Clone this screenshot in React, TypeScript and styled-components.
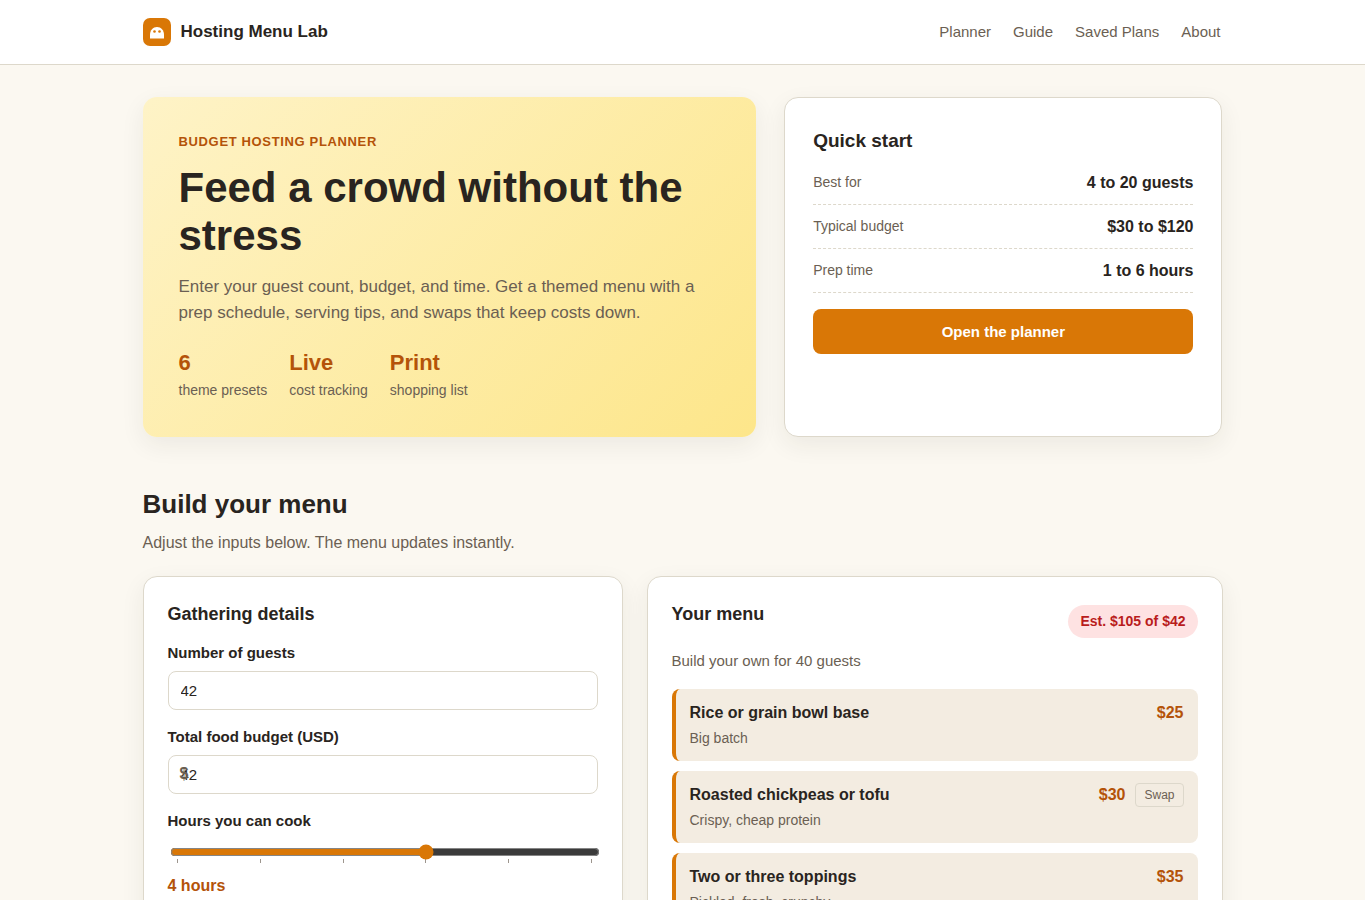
import React, { useState } from "react";
import styled, { createGlobalStyle } from "styled-components";

const color = {
  page: "#fbf8f1",
  card: "#ffffff",
  tint: "#f3ece1",
  border: "#ddd8cb",
  text: "#292420",
  muted: "#6b5f53",
  accent: "#d97706",
  accentDark: "#b45309",
};

const GlobalStyle = createGlobalStyle`
  *, *::before, *::after { box-sizing: border-box; }
  body {
    margin: 0;
    background: ${color.page};
    color: ${color.text};
    font-family: "Liberation Sans", Arial, sans-serif;
    font-size: 16px;
    line-height: 24px;
  }
  h1, h2, h3, p, ul, dl, dd { margin: 0; padding: 0; }
`;

const Container = styled.div`
  max-width: 1120px;
  margin: 0 auto;
  padding: 0 20px;
`;

const Header = styled.header`
  background: ${color.card};
  border-bottom: 1px solid ${color.border};
`;

const HeaderRow = styled(Container)`
  display: flex;
  align-items: center;
  justify-content: space-between;
  padding-top: 18px;
  padding-bottom: 18px;
`;

const Brand = styled.a`
  display: flex;
  align-items: center;
  gap: 10px;
  height: 28px;
  color: ${color.text};
  font-size: 17px;
  font-weight: 700;
  text-decoration: none;
`;

const Nav = styled.nav`
  display: flex;
  gap: 22px;
  padding-right: 2px;
`;

const NavLink = styled.a`
  color: ${color.muted};
  font-size: 15px;
  text-decoration: none;
`;

const Hero = styled.section`
  display: grid;
  grid-template-columns: 1.4fr 1fr;
  gap: 28px;
  padding-top: 32px;
`;

const HeroPanel = styled.div`
  padding: 36px;
  border-radius: 14px;
  background: linear-gradient(135deg, #fef3c7, #fde68a);
  box-shadow: 0 8px 24px rgba(41, 36, 32, 0.07);
`;

const Eyebrow = styled.p`
  color: ${color.accentDark};
  font-size: 13px;
  font-weight: 700;
  line-height: 18px;
  letter-spacing: 0.05em;
  text-transform: uppercase;
`;

const HeroTitle = styled.h1`
  margin-top: 13px;
  font-size: 42px;
  line-height: 48px;
`;

const HeroText = styled.p`
  margin-top: 14px;
  color: ${color.muted};
  font-size: 17px;
  line-height: 26px;
`;

const Stats = styled.ul`
  display: flex;
  gap: 22px;
  margin-top: 23px;
  list-style: none;
`;

const StatValue = styled.strong`
  display: block;
  color: ${color.accentDark};
  font-size: 22px;
  line-height: 28px;
`;

const StatLabel = styled.span`
  display: block;
  margin-top: 3px;
  color: ${color.muted};
  font-size: 14px;
  line-height: 21px;
`;

const Card = styled.section<{ $pad?: number }>`
  min-width: 0;
  padding: ${(p) => p.$pad ?? 24}px;
  border: 1px solid ${color.border};
  border-radius: 14px;
  background: ${color.card};
  box-shadow: 0 8px 24px rgba(41, 36, 32, 0.07);
`;

const QuickTitle = styled.h2`
  font-size: 19px;
  line-height: 30px;
  margin-bottom: 5px;
`;

const Fact = styled.div`
  display: flex;
  justify-content: space-between;
  padding: 10px 0 9px;
  border-bottom: 1px dashed ${color.border};
`;

const FactName = styled.dt`
  color: ${color.muted};
  font-size: 14px;
  line-height: 22px;
`;

const FactValue = styled.dd`
  font-weight: 700;
`;

const PrimaryButton = styled.button`
  width: 100%;
  margin-top: 16px;
  padding: 12px 20px;
  border: 0;
  border-radius: 8px;
  background: ${color.accent};
  color: #fff;
  font: 700 15px/21px "Liberation Sans", Arial, sans-serif;
  cursor: pointer;
`;

const SectionHead = styled.div`
  padding: 48px 0 21px;
`;

const SectionTitle = styled.h2`
  font-size: 26px;
  line-height: 39px;
`;

const SectionText = styled.p`
  margin-top: 7px;
  color: ${color.muted};
`;

const Planner = styled.div`
  display: grid;
  grid-template-columns: 1fr 1.2fr;
  gap: 24px;
  padding-bottom: 48px;
`;

const CardTitle = styled.h3`
  margin-bottom: 15px;
  font-size: 18px;
  line-height: 26px;
`;

const Field = styled.div`
  margin-bottom: 16px;
`;

const Label = styled.label`
  display: block;
  margin-bottom: 7px;
  font-size: 15px;
  font-weight: 700;
  line-height: 22px;
`;

const InputWrap = styled.div`
  position: relative;
`;

const Prefix = styled.span`
  position: absolute;
  top: 7px;
  left: 12px;
  color: ${color.muted};
  font-weight: 700;
  pointer-events: none;
`;

const TextInput = styled.input`
  display: block;
  width: 100%;
  height: 39px;
  padding: 0 12px;
  border: 1px solid ${color.border};
  border-radius: 8px;
  background: ${color.card};
  color: ${color.text};
  font: 15px "Liberation Sans", Arial, sans-serif;
  appearance: textfield;

  &::-webkit-inner-spin-button { display: none; }
`;

const Range = styled.input`
  width: 100%;
  accent-color: ${color.accent};
`;

const RangeValue = styled.output`
  display: block;
  margin-top: 4px;
  color: ${color.accentDark};
  font-weight: 700;
`;

const MenuHead = styled.div`
  display: flex;
  align-items: center;
  justify-content: space-between;
`;

const CostPill = styled.span`
  padding: 6px 12px;
  border-radius: 999px;
  background: #fee2e2;
  color: #b91c1c;
  font-size: 14px;
  font-weight: 700;
  line-height: 21px;
`;

const MenuNote = styled.p`
  margin: 8px 0 17px;
  color: ${color.muted};
  font-size: 15px;
  line-height: 22px;
`;

const DishList = styled.ul`
  display: grid;
  gap: 10px;
  list-style: none;
`;

const Dish = styled.li`
  display: flex;
  align-items: flex-start;
  justify-content: space-between;
  padding: 12px 14px;
  border-left: 4px solid ${color.accent};
  border-radius: 8px;
  background: ${color.tint};
`;

const DishName = styled.strong`
  display: block;
`;

const DishNote = styled.span`
  display: block;
  margin-top: 2px;
  color: ${color.muted};
  font-size: 14px;
  line-height: 22px;
`;

const DishSide = styled.div`
  display: flex;
  align-items: center;
  gap: 10px;
`;

const Price = styled.span`
  color: ${color.accentDark};
  font-weight: 700;
`;

const SwapButton = styled.button`
  height: 24px;
  padding: 0 8px;
  border: 1px solid ${color.border};
  border-radius: 4px;
  background: transparent;
  color: ${color.muted};
  font: 12px "Liberation Sans", Arial, sans-serif;
  cursor: pointer;
`;

const stats = [
  { value: "6", label: "theme presets" },
  { value: "Live", label: "cost tracking" },
  { value: "Print", label: "shopping list" },
];

const facts = [
  { name: "Best for", value: "4 to 20 guests" },
  { name: "Typical budget", value: "$30 to $120" },
  { name: "Prep time", value: "1 to 6 hours" },
];

const dishes = [
  { name: "Rice or grain bowl base", note: "Big batch", price: 25, swap: false },
  { name: "Roasted chickpeas or tofu", note: "Crispy, cheap protein", price: 30, swap: true },
  { name: "Two or three toppings", note: "Pickled, fresh, crunchy", price: 35, swap: false },
];

function Logo() {
  return (
    <svg width="28" height="28" viewBox="0 0 28 28" aria-hidden="true">
      <rect width="28" height="28" rx="7" fill={color.accent} />
      <path d="M7 20.500V17C7 12 10 9 14 9s7 3 7 8v3.500z" fill="#fff" />
      <circle cx="11.500" cy="13.500" r="1.300" fill={color.accent} />
      <circle cx="16.500" cy="13.500" r="1.300" fill={color.accent} />
    </svg>
  );
}

export default function App() {
  const [guests, setGuests] = useState("42");
  const [budget, setBudget] = useState("42");
  const [hours, setHours] = useState(4);

  return (
    <>
      <GlobalStyle />
      <Header>
        <HeaderRow>
          <Brand href="#">
            <Logo />
            Hosting Menu Lab
          </Brand>
          <Nav>
            <NavLink href="#planner">Planner</NavLink>
            <NavLink href="#guide">Guide</NavLink>
            <NavLink href="#saved">Saved Plans</NavLink>
            <NavLink href="#about">About</NavLink>
          </Nav>
        </HeaderRow>
      </Header>
      <Container as="main">
        <Hero>
          <HeroPanel>
            <Eyebrow>Budget hosting planner</Eyebrow>
            <HeroTitle>Feed a crowd without the stress</HeroTitle>
            <HeroText>
              Enter your guest count, budget, and time. Get a themed menu with a prep schedule,
              serving tips, and swaps that keep costs down.
            </HeroText>
            <Stats>
              {stats.map((s) => (
                <li key={s.label}>
                  <StatValue>{s.value}</StatValue>
                  <StatLabel>{s.label}</StatLabel>
                </li>
              ))}
            </Stats>
          </HeroPanel>
          <Card $pad={28}>
            <QuickTitle>Quick start</QuickTitle>
            <dl>
              {facts.map((f) => (
                <Fact key={f.name}>
                  <FactName>{f.name}</FactName>
                  <FactValue>{f.value}</FactValue>
                </Fact>
              ))}
            </dl>
            <PrimaryButton type="button">Open the planner</PrimaryButton>
          </Card>
        </Hero>

        <SectionHead id="planner">
          <SectionTitle>Build your menu</SectionTitle>
          <SectionText>Adjust the inputs below. The menu updates instantly.</SectionText>
        </SectionHead>

        <Planner>
          <Card>
            <CardTitle>Gathering details</CardTitle>
            <Field>
              <Label htmlFor="guests">Number of guests</Label>
              <TextInput
                id="guests"
                type="number"
                value={guests}
                onChange={(e) => setGuests(e.target.value)}
              />
            </Field>
            <Field>
              <Label htmlFor="budget">Total food budget (USD)</Label>
              <InputWrap>
                <TextInput
                  id="budget"
                  type="number"
                  value={budget}
                  onChange={(e) => setBudget(e.target.value)}
                />
                <Prefix>$</Prefix>
              </InputWrap>
            </Field>
            <div>
              <Label htmlFor="hours">Hours you can cook</Label>
              <Range
                id="hours"
                type="range"
                min={1}
                max={6}
                list="hour-marks"
                value={hours}
                onChange={(e) => setHours(Number(e.target.value))}
              />
              <datalist id="hour-marks">
                {[1, 2, 3, 4, 5, 6].map((h) => (
                  <option key={h} value={h} />
                ))}
              </datalist>
              <RangeValue htmlFor="hours">{hours} hours</RangeValue>
            </div>
          </Card>

          <Card>
            <MenuHead>
              <CardTitle>Your menu</CardTitle>
              <CostPill>Est. $105 of $42</CostPill>
            </MenuHead>
            <MenuNote>Build your own for 40 guests</MenuNote>
            <DishList>
              {dishes.map((d) => (
                <Dish key={d.name}>
                  <div>
                    <DishName>{d.name}</DishName>
                    <DishNote>{d.note}</DishNote>
                  </div>
                  <DishSide>
                    <Price>${d.price}</Price>
                    {d.swap && <SwapButton type="button">Swap</SwapButton>}
                  </DishSide>
                </Dish>
              ))}
            </DishList>
          </Card>
        </Planner>
      </Container>
    </>
  );
}
